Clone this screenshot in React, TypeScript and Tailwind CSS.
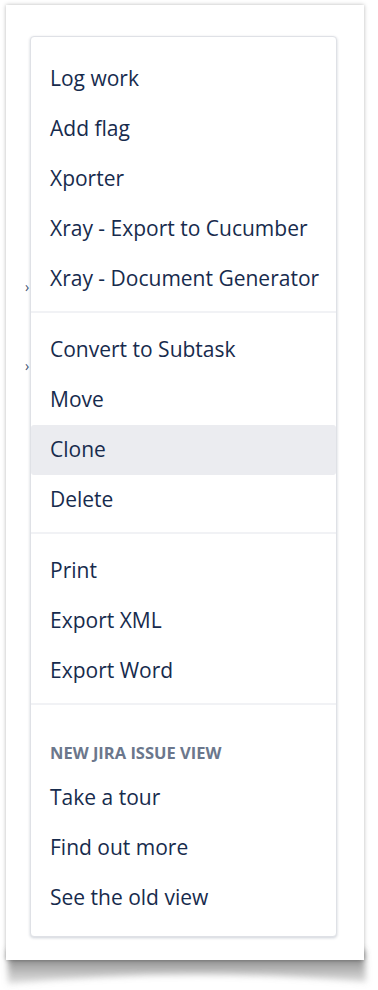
import React from "react";

const groups: { heading?: string; items: string[] }[] = [
  { items: ["Log work", "Add flag", "Xporter", "Xray - Export to Cucumber", "Xray - Document Generator"] },
  { items: ["Convert to Subtask", "Move", "Clone", "Delete"] },
  { items: ["Print", "Export XML", "Export Word"] },
  { heading: "NEW JIRA ISSUE VIEW", items: ["Take a tour", "Find out more", "See the old view"] },
];

export default function App() {
  return (
    <div
      className="relative w-[378px] h-[990px] bg-white overflow-hidden pt-[5px] pl-[6px]"
      style={{ fontFamily: '"Open Sans", "Noto Sans", sans-serif' }}
    >
      {/* lifted-corner page shadow */}
      <svg className="absolute left-0 top-[930px]" width="378" height="60" viewBox="0 930 378 60">
        <defs>
          <filter id="sb" x="-10%" y="-50%" width="120%" height="200%">
            <feGaussianBlur stdDeviation="3" />
          </filter>
          <linearGradient id="sg" x1="0" y1="0" x2="0" y2="1">
            <stop offset="0" stopColor="#555" stopOpacity="0.9" />
            <stop offset="1" stopColor="#999" stopOpacity="0.3" />
          </linearGradient>
        </defs>
        <path d="M8 950 L364 950 L366 982 Q186 966 8 984 Z" fill="url(#sg)" filter="url(#sb)" />
      </svg>

      <div className="relative w-[358px] h-[955px] bg-white shadow-[0_0_4px_rgba(0,0,0,0.28)] pt-[31px] pl-[24px]">
        {/* partially hidden glyphs behind menu */}
        <span className="absolute left-[19px] top-[275px] text-[14px] leading-none text-[#42526e]">›</span>
        <span className="absolute left-[19px] top-[354px] text-[14px] leading-none text-[#42526e]">›</span>

        <div className="relative w-[307px] bg-white rounded-[4px] border border-[#dfe1e6] shadow-[0_1px_3px_rgba(9,30,66,0.2)] py-[8px] flex flex-col">
          {groups.map((g, gi) => (
            <div key={gi} className="flex flex-col">
              {gi > 0 && <div className="h-[2px] bg-[#f1f2f5]" />}
              <div className={`flex flex-col ${gi === 0 ? "pt-[9px]" : "pt-[12px]"} ${gi === 3 ? "pb-[5px]" : "pb-[7px]"}`}>
                {g.heading && (
                  <div className="pt-[26px] pb-[10px] pl-[19px] leading-[20px] text-[16.5px] font-bold text-[#6b778c]">
                    {g.heading}
                  </div>
                )}
                {g.items.map((it) => (
                  <div
                    key={it}
                    className={`h-[50px] flex items-center pl-[19px] text-[21px] text-[#172b4d] ${
                      it === "Clone" ? "bg-[#ebecf0] rounded-[3px]" : ""
                    }`}
                  >
                    {it}
                  </div>
                ))}
              </div>
            </div>
          ))}
        </div>
      </div>
    </div>
  );
}
